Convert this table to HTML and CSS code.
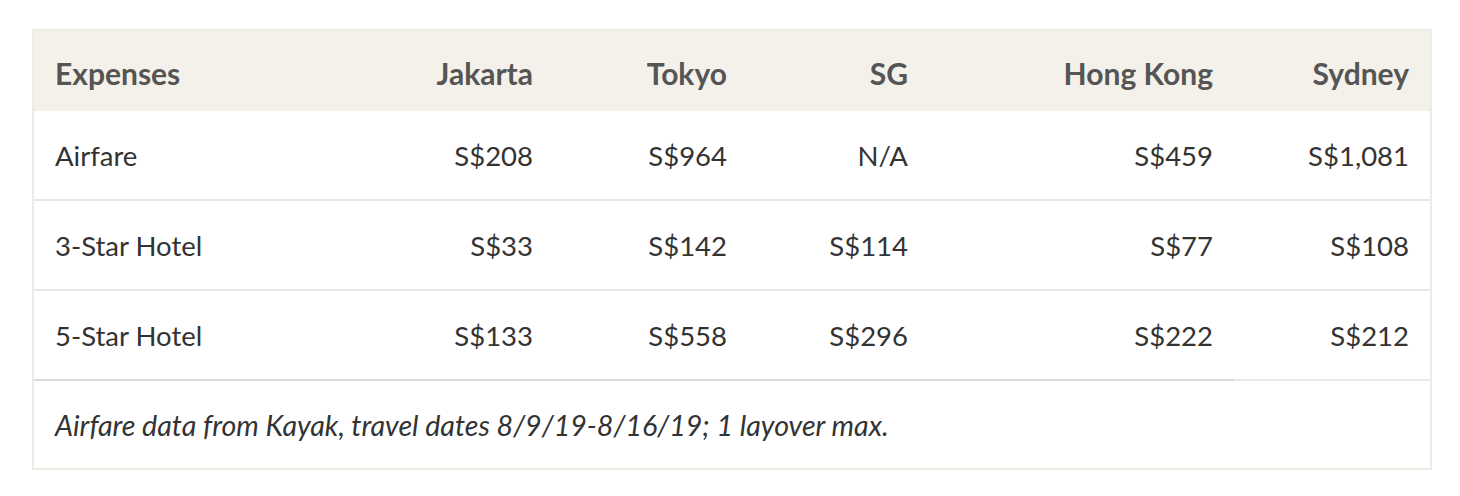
FILE: index.html
```html
<!DOCTYPE html>
<html>
<head>
<meta charset="utf-8">
<link rel="stylesheet" href="styles.css">
</head>
<body>
<div class="frame">
  <table class="expenses">
    <colgroup>
      <col class="c1"><col class="c2"><col class="c3"><col class="c4"><col class="c5"><col class="c6">
    </colgroup>
    <thead>
      <tr>
        <th class="left">Expenses</th>
        <th>Jakarta</th>
        <th>Tokyo</th>
        <th>SG</th>
        <th>Hong Kong</th>
        <th>Sydney</th>
      </tr>
    </thead>
    <tbody>
      <tr>
        <td class="left">Airfare</td>
        <td>S$208</td>
        <td>S$964</td>
        <td>N/A</td>
        <td>S$459</td>
        <td>S$1,081</td>
      </tr>
      <tr>
        <td class="left">3-Star Hotel</td>
        <td>S$33</td>
        <td>S$142</td>
        <td>S$114</td>
        <td>S$77</td>
        <td>S$108</td>
      </tr>
      <tr class="last">
        <td class="left">5-Star Hotel</td>
        <td>S$133</td>
        <td>S$558</td>
        <td>S$296</td>
        <td>S$222</td>
        <td>S$212</td>
      </tr>
    </tbody>
    <tfoot>
      <tr>
        <td class="note" colspan="5">Airfare data from Kayak, travel dates 8/9/19-8/16/19; 1 layover max.</td>
        <td class="note-end"></td>
      </tr>
    </tfoot>
  </table>
</div>
</body>
</html>
```

FILE: styles.css
```css
html, body {
  margin: 0;
  padding: 0;
  background: #ffffff;
}
body {
  padding: 29px 28px 0 32px;
  font-family: "Lato", "Liberation Sans", sans-serif;
}
.frame {
  width: 1396px;
  border: 2px solid #eeebe2;
}
.expenses {
  width: 100%;
  border-collapse: collapse;
  table-layout: fixed;
  font-size: 27.5px;
}
.c1 { width: 300px; }
.c2 { width: 220px; }
.c3 { width: 194px; }
.c4 { width: 181px; }
.c5 { width: 305px; }
.c6 { width: 196px; }
.expenses th,
.expenses td {
  padding: 0 21px;
  text-align: right;
  vertical-align: middle;
  white-space: nowrap;
}
.expenses .left { text-align: left; }
.expenses thead th {
  background: #f4f1ea;
  color: #555555;
  font-weight: 700;
  font-size: 30px;
  height: 80px;
  box-sizing: border-box;
  padding-top: 3px;
}
.expenses tbody td {
  color: #333333;
  height: 88px;
  border-bottom: 2px solid #e8e8e8;
}
.expenses tbody tr.last td { border-bottom: none; }
.expenses tfoot td {
  height: 87px;
}
.expenses .note {
  text-align: left;
  font-style: italic;
  font-size: 28.6px;
  color: #333333;
  border-top: 2px solid #d6dadd;
}
.expenses .note-end {
  border-top: 2px solid #e8e8e8;
}
```
